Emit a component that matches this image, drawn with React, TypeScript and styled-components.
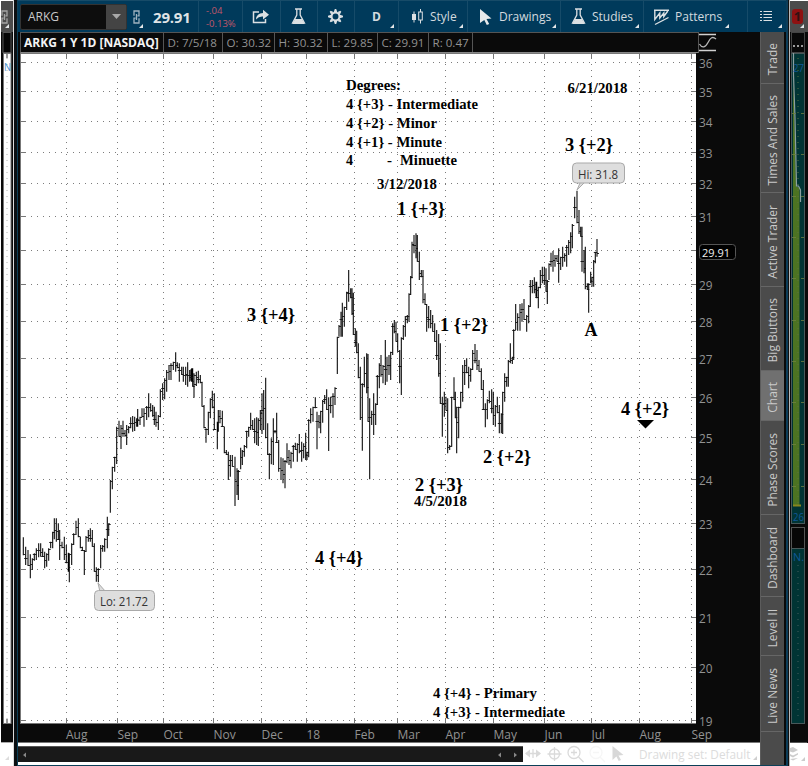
import React from 'react';
import styled, { createGlobalStyle } from 'styled-components';

const Global = createGlobalStyle`
  * { box-sizing: border-box; }
  html, body { margin: 0; padding: 0; background: #fff; }
  body { width: 808px; height: 766px; overflow: hidden; font-family: "Open Sans", "Noto Sans", sans-serif; }
  svg { display: block; flex: none; overflow: visible; }
`;

const Desktop = styled.div`
  display: grid;
  grid-template-columns: 1px 12px 1px 3px 769px 2px 1px 1px 18px;
  width: 808px;
  height: 766px;
  overflow: hidden;
`;

const Gutter = styled.div<{ $color: string }>`
  background: ${p => p.$color};
`;

const Sliver = styled.div`
  display: flex;
  flex-direction: column;
  overflow: hidden;
  background: #fff;
`;

const SliverHead = styled.div`
  display: flex;
  height: 32px;
  flex: none;
  background: #4b4b4b;
  border-top: 1px solid #fff;
`;

const SliverBody = styled.div`
  height: 711px;
  background: #0a0a0a;
`;

const SliverFoot = styled.div`
  display: flex;
  height: 23px;
`;

const Window = styled.div`
  display: flex;
  flex-direction: column;
  background: #0a0a0a;
  border-left: 1px solid #0c4058;
  border-bottom: 1px solid #0c4058;
  height: 766px;
`;

const Toolbar = styled.div`
  display: flex;
  height: 32px;
  flex: none;
  background: #003a5b;
  border-top: 1px solid #174b68;
  color: #d3dadf;
`;

const Tool = styled.div<{ $w: number; $pad?: number; $gap?: number; $last?: boolean }>`
  position: relative;
  display: flex;
  align-items: center;
  flex: none;
  width: ${p => p.$w}px;
  padding-left: ${p => p.$pad ?? 0}px;
  gap: ${p => p.$gap ?? 0}px;
  border-right: ${p => (p.$last ? 0 : 1)}px solid #164b69;
  font-size: 12px;
  white-space: nowrap;
`;

const Corner = styled.i<{ $right?: number; $bottom?: number; $color?: string }>`
  position: absolute;
  right: ${p => p.$right ?? 4}px;
  bottom: ${p => p.$bottom ?? 4}px;
  border-left: 4px solid transparent;
  border-bottom: 4px solid ${p => p.$color ?? '#e3e6e8'};
`;

const SymbolBox = styled.div`
  display: flex;
  align-items: center;
  width: 107px;
  height: 26px;
  padding-left: 7px;
  background: #0d0d0d;
  border: 1px solid #333;
  border-radius: 2px;
  color: #c8c8c8;
  font-size: 12px;
`;

const DropButton = styled.div`
  display: flex;
  align-items: center;
  justify-content: center;
  width: 20px;
  height: 24px;
  margin-left: auto;
  background: #444;
`;

const LastPrice = styled.b`
  font-size: 15px;
  color: #dfe3e6;
  letter-spacing: -0.2px;
`;

const Change = styled.div`
  display: flex;
  flex-direction: column;
  font-size: 9.5px;
  line-height: 13px;
  color: #c1566a;
`;

const Main = styled.div`
  display: flex;
  height: 733px;
`;

const Content = styled.div`
  display: flex;
  flex-direction: column;
  width: 742px;
`;

const InfoRow = styled.div`
  display: flex;
  height: 21px;
  width: 679px;
  margin-left: 2px;
  border: 1px solid #555;
  border-bottom-color: #888;
  color: #929292;
  font-size: 11.6px;
  line-height: 19px;
`;

const InfoCell = styled.div<{ $w: number; $bold?: boolean }>`
  width: ${p => p.$w}px;
  padding-left: ${p => (p.$bold ? 3 : 3.5)}px;
  border-right: 1px solid #555;
  font-weight: ${p => (p.$bold ? 700 : 400)};
  font-size: ${p => (p.$bold ? '12px' : '11.6px')};
  color: ${p => (p.$bold ? '#f4f4f4' : '#929292')};
  white-space: nowrap;
`;

const TopRow = styled.div`
  display: flex;
  gap: 1px;
`;

const PlotRow = styled.div`
  display: flex;
  height: 671px;
`;

const Footer = styled.div`
  position: relative;
  display: flex;
  align-items: center;
  height: 22px;
  background: #fff;
  color: #dcdcdc;
  font-size: 12px;
`;

const ScrollBar = styled.div`
  display: flex;
  align-items: center;
  width: 505px;
  height: 16px;
  margin-right: 2px;
  background: #191919;
  border-top: 1px solid #555;
`;

const SetLabel = styled.span`
  margin-left: 17px;
  font-size: 11.8px;
  white-space: nowrap;
`;

const Tabs = styled.div`
  display: flex;
  flex-direction: column;
  width: 24px;
  background: #4b4b4b;
  border-left: 1px solid #5c5c5c;
`;

const Tab = styled.div<{ $h: number; $active?: boolean }>`
  display: flex;
  align-items: center;
  justify-content: center;
  height: ${p => p.$h}px;
  flex: none;
  padding-top: 4px;
  background: ${p => (p.$active ? '#707070' : '#4b4b4b')};
  border-bottom: 1px solid #666;
  color: #c9c9c9;
  font-size: 12px;
`;

const TabText = styled.span`
  writing-mode: vertical-rl;
  transform: rotate(180deg);
  line-height: 16px;
  white-space: nowrap;
`;

type Span = [number, number, number];

// Each segment keeps bars as [x, high, low] in tripled units with its own origin.
const segments: { ox: number; oy: number; bars: Span[] }[] = [
  { ox: 0, oy: 330, bars: [
    [70,622,676],[77,650,705],[84,660,708],[91,673,745],[97,685,720],[103,670,692],[109,655,690],[116,640,682],[122,640,680],[128,655,680],[134,665,715],[140,670,710],[146,655,692],[152,635,655],[158,605,655],[163,565,628],[169,565,635],[175,580,630],[179,600,690],[186,635,655],[193,620,690],[199,645,700],[205,668,725],[208,670,757],[215,640,705],[221,610,645],[228,572,615],[235,565,622],[241,620,655],[247,650,663],[253,660,735],[258,618,665],[265,600,635],[271,595,635],[277,600,650],[283,640,725],[289,712,755],[295,715,757],[302,645,715],[308,645,665],[314,625,665],[322,560,655],[326,580,618],[331,450,548],[337,410,478],[344,380,425],[350,290,402],[357,272,320],[363,285,357],[369,272,320],[375,300,320],[380,285,345],[386,288,310],[392,262,295],[398,258,305],[404,260,303],[410,265,290],[413,237,290],[420,260,285],[426,235,262],[432,235,290],[440,228,270],[446,190,262],[452,220,245],[458,225,260],[463,230,285],[468,245,290],[475,255,300],[481,178,262],[488,160,210],[494,145,208],[500,120,185],[507,105,150],[513,100,150],[520,95,120],[527,67,125],[532,97,115],[538,100,155],[545,110,135],[550,110,155],[557,110,165],[563,97,170],[569,120,155],[575,115,155],[582,130,203]] },
  { ox: 190, oy: 260, bars: [
    [3,328,362],[8,325,380],[12,370,413],[19,335,378],[25,332,370],[31,345,370],[36,365,440],[42,435,505],[48,505,548],[55,455,525],[61,415,475],[67,392,445],[73,400,510],[82,485,568],[85,450,515],[90,450,490],[97,452,500],[103,500,580],[109,570,585],[115,575,660],[121,585,650],[127,585,620],[135,590,738],[141,625,705],[145,630,720],[152,563,628],[157,570,615],[163,555,590],[170,512,565],[176,500,530],[182,458,510],[188,480,510],[194,475,550],[200,472,555],[205,475,558],[211,450,510],[216,400,522],[221,390,510],[227,353,535],[233,490,585],[238,580,658],[244,535,613],[250,475,615],[255,510,520],[260,458,548],[266,540,635],[273,592,660],[279,595,670],[285,600,685],[291,550,610],[297,570,615],[303,575,625],[310,555,605],[316,548,570],[322,550,605],[328,522,580],[335,545,605],[341,550,595],[347,518,600],[351,575,600],[356,478,592],[362,445,490],[369,440,485],[376,412,445],[381,455,568],[387,465,505],[392,452,520],[398,420,488],[404,405,432],[410,388,450],[416,412,573],[422,410,460],[429,400,473],[435,382,435],[442,230,342],[447,195,230],[453,155,230],[457,128,230],[463,140,200],[470,95,150],[476,30,125],[482,85,115],[486,85,165],[490,98,225],[496,205,260],[500,212,280],[505,250,355],[511,320,480],[517,370,572],[523,290,382],[530,280,400],[534,282,485],[539,415,658],[545,452,495],[551,400,525],[557,430,495],[562,345,435],[568,310,385],[573,285,350],[579,315,370]] },
  { ox: 340, oy: 200, bars: [
    [136,420,555],[141,470,545],[147,465,525],[152,455,540],[158,370,465],[163,360,400],[168,365,425],[173,400,455],[179,450,550],[184,412,585],[190,375,420],[196,348,410],[202,345,370],[207,280,365],[212,228,285],[216,125,235],[222,105,160],[228,100,175],[232,105,185],[238,155,240],[244,210,232],[249,210,310],[255,280,315],[260,312,395],[266,318,385],[272,330,385],[278,345,395],[284,370,425],[290,390,480],[296,402,530],[301,430,612],[307,590,710],[313,575,650],[318,590,632],[323,595,760],[329,735,750],[335,590,740],[342,532,600],[346,575,655],[350,620,760],[356,620,715],[362,575,625],[368,495,605],[374,480,555],[380,475,520],[386,500,565],[392,505,545],[398,450,510],[405,432,490],[411,450,510],[417,480,515],[424,505,570],[430,540,630],[436,610,682],[442,598,658],[448,572,610],[455,568,640],[460,575,675],[466,615,680],[472,590,640],[478,615,700],[484,640,700],[488,575,702],[494,520,605],[500,530,560],[505,480,560],[511,430,490],[517,470,492],[521,388,480],[527,312,390],[533,340,392],[540,312,392],[546,310,365],[552,297,360],[560,345,395],[566,315,370],[571,240,320],[577,240,280],[583,232,280],[588,245,290]] },
  { ox: 480, oy: 70, bars: [
    [170,635,685],[175,650,715],[181,600,655],[187,590,640],[193,590,645],[198,595,665],[202,630,702],[207,580,630],[213,548,590],[219,543,605],[225,555,590],[231,555,575],[236,535,638],[242,560,600],[248,530,590],[254,550,575],[260,525,590],[266,510,555],[272,487,550],[277,462,535],[284,380,445],[291,362,460],[297,420,492],[302,470,500],[306,470,605],[312,540,610],[316,530,658],[322,640,660],[326,640,728],[332,605,640],[336,620,650],[341,570,650],[346,545,580],[351,507,560]] },
];

const bars = segments.flatMap(s =>
  s.bars.map(([x, h, l]) => ({ x: s.ox + x / 3, h: s.oy + h / 3, l: s.oy + l / 3 })),
);

const closes = bars.map((b, i) => {
  const next = bars[i + 1];
  const target = next ? (next.h + next.l) / 2 : 253.5;
  return Math.min(b.l - 0.5, Math.max(b.h + 1, target));
});

const barPath = bars.map(b => `M${b.x.toFixed(1)} ${b.h.toFixed(1)}V${b.l.toFixed(1)}`).join('');
const tickPath = bars
  .map((b, i) => {
    const y = Math.floor(closes[i]) + 0.5;
    return i % 4 === 1 ? `M${(b.x - 1.5).toFixed(1)} ${y}h3.5` : `M${b.x.toFixed(1)} ${y}h2`;
  })
  .join('');

const months: [string, number][] = [
  ['Aug', 66], ['Sep', 117.5], ['Oct', 163.5], ['Nov', 213.5], ['Dec', 261.5], ['18', 306.5], ['Feb', 354.5],
  ['Mar', 397.5], ['Apr', 445.5], ['May', 493.5], ['Jun', 544.5], ['Jul', 591.5], ['Aug', 639.5], ['Sep', 691.5],
];

const prices: [number, number][] = [
  [36, 63], [35, 92], [34, 122], [33, 153], [32, 184], [31, 217], [30, 251], [29, 285], [28, 322],
  [27, 359], [26, 398], [25, 438], [24, 480], [23, 524], [22, 570], [21, 618], [20, 668], [19, 721],
];

const notes: { t: string; x: number; y: number; w: number; s: number }[] = [
  { t: 'Degrees:', x: 346, y: 90, w: 55, s: 15 },
  { t: '4 {+3} - Intermediate', x: 346, y: 109, w: 132, s: 15 },
  { t: '4 {+2} - Minor', x: 346, y: 128, w: 91, s: 15 },
  { t: '4 {+1} - Minute', x: 346, y: 147, w: 96, s: 15 },
  { t: '4', x: 346, y: 165, w: 7, s: 15 },
  { t: '-', x: 387, y: 165, w: 5, s: 15 },
  { t: 'Minuette', x: 400, y: 165, w: 57, s: 15 },
  { t: '3/12/2018', x: 377, y: 189, w: 60, s: 15 },
  { t: '1 {+3}', x: 397, y: 215, w: 48, s: 19 },
  { t: '6/21/2018', x: 567.5, y: 93, w: 60, s: 15 },
  { t: '3 {+2}', x: 565, y: 151, w: 48, s: 19 },
  { t: '3 {+4}', x: 247, y: 321, w: 48, s: 19 },
  { t: '1 {+2}', x: 440, y: 331, w: 48, s: 19 },
  { t: 'A', x: 584.5, y: 336, w: 13, s: 18 },
  { t: '4 {+2}', x: 621, y: 415, w: 48, s: 19 },
  { t: '2 {+2}', x: 483, y: 463, w: 48, s: 19 },
  { t: '2 {+3}', x: 415, y: 491, w: 48, s: 19 },
  { t: '4/5/2018', x: 414, y: 505.5, w: 53, s: 15 },
  { t: '4 {+4}', x: 315, y: 564, w: 48, s: 19 },
  { t: '4 {+4} - Primary', x: 433, y: 698, w: 104, s: 15 },
  { t: '4 {+3} - Intermediate', x: 433, y: 717, w: 132, s: 15 },
];

const serif = '"Liberation Serif", "Times New Roman", serif';
const sans = '"Open Sans", "Noto Sans", sans-serif';

function Plot() {
  return (
    <svg width="679" height="671" viewBox="18 53 679 671">
      <rect x="18" y="53" width="679" height="671" fill="#0a0a0a" />
      <rect x="20" y="53" width="676" height="671" fill="#777" />
      <rect x="21" y="54" width="675" height="669" fill="#fff" />
      {prices.map(([p, y]) => (
        <g key={p}>
          <path d={`M25 ${Math.floor(y) - 0.5}H692`} stroke="#7c7c7c" strokeDasharray="1 5" />
          <path d={`M21 ${Math.floor(y) - 0.5}h4M692 ${Math.floor(y) - 0.5}h4`} stroke="#777" />
        </g>
      ))}
      {months.map(([m, x], i) => (
        <g key={m + i}>
          <path d={`M${Math.floor(x) + 0.5} 58V720`} stroke="#7c7c7c" strokeDasharray="1 5" />
          <path d={`M${Math.floor(x) + 0.5} 54v4M${Math.floor(x) + 0.5} 719v4`} stroke="#777" />
        </g>
      ))}
      <path d={barPath} stroke="#000" strokeWidth="1.05" fill="none" />
      <path d={tickPath} stroke="#111" strokeWidth="0.9" fill="none" />
      <g stroke="#a9a9a9" fill="#dedede">
        <path d="M100 592l-2-9 8 9" />
        <rect x="94.5" y="590.5" width="60" height="20" rx="4" />
        <path d="M580 183l-3 7 7-7" />
        <rect x="572.5" y="163" width="52" height="20" rx="4" />
      </g>
      <g fontFamily={sans} fontSize="12" fill="#333">
        <text x="100" y="606" textLength="48" lengthAdjust="spacingAndGlyphs">Lo: 21.72</text>
        <text x="578" y="178.5" textLength="40" lengthAdjust="spacingAndGlyphs">Hi: 31.8</text>
      </g>
      <g fontFamily={serif} fontWeight="700" fill="#000">
        {notes.map(n => (
          <text key={n.t + n.x + n.y} x={n.x} y={n.y} fontSize={n.s} textLength={n.w} lengthAdjust="spacingAndGlyphs">
            {n.t}
          </text>
        ))}
      </g>
      <path d="M637 420h17l-8.500 8.500z" fill="#000" />
    </svg>
  );
}

function PriceAxis() {
  return (
    <svg width="63" height="671" viewBox="697 53 63 671">
      <g fontFamily={sans} fontSize="12" fill="#929292">
        {prices.filter(([p]) => p !== 30).map(([p, y]) => (
          <text key={p} x="699" y={y + 4.5} textLength="13.500" lengthAdjust="spacingAndGlyphs">{p}</text>
        ))}
      </g>
      <rect x="699.5" y="244.500" width="36" height="15" rx="3" fill="#000" stroke="#555" />
      <text x="702" y="256.500" fontFamily={sans} fontSize="11.500" fill="#f0f0f0" textLength="28" lengthAdjust="spacingAndGlyphs">29.91</text>
    </svg>
  );
}

function TimeAxis() {
  return (
    <svg width="742" height="19" viewBox="18 724 742 19">
      <g fontFamily={sans} fontSize="12" fill="#929292">
        {months.map(([m, x], i) => <text key={m + i} x={x} y="739">{m}</text>)}
      </g>
      <path d="M18 742.500H760" stroke="#777" />
    </svg>
  );
}

const Flask = () => (
  <svg width="15" height="17" viewBox="0 0 15 17">
    <path d="M4 1h7M5.800 1.500V7L1.500 15.200h12L9.200 7V1.500" fill="none" stroke="#dbe0e3" strokeWidth="1.300" />
    <path d="M4 11h7l2.500 5h-12z" fill="#dbe0e3" />
  </svg>
);

const Link = ({ color = '#9fb3c0' }: { color?: string }) => (
  <svg width="7" height="14" viewBox="0 0 7 14">
    <path d="M1 5.800V1h5v4.800H4.500M2.500 8.200H1V13h5V8.200M3.500 4v6" fill="none" stroke={color} strokeWidth="1.300" />
  </svg>
);

const Share = () => (
  <svg width="18" height="15" viewBox="0 0 18 15">
    <path d="M7 3H1.500v10.500h12V10" fill="none" stroke="#dbe0e3" strokeWidth="1.500" />
    <path d="M4 10.500Q4.500 4 11 4V.8l6 4.900-6 4.800V7.500Q7 7 4 10.500z" fill="#dbe0e3" />
  </svg>
);

const Gear = () => (
  <svg width="15" height="15" viewBox="-7.500 -7.500 15 15">
    <circle r="3.900" fill="none" stroke="#dbe0e3" strokeWidth="1.900" />
    {[0, 45, 90, 135, 180, 225, 270, 315].map(a => (
      <path key={a} d="M-1.700-4.500L-.7-7.500H.7L1.700-4.500z" fill="#dbe0e3" transform={`rotate(${a})`} />
    ))}
  </svg>
);

const Candles = () => (
  <svg width="13" height="15" viewBox="0 0 13 15">
    <path d="M3 2.500v11M9.500 0v3M9.500 11v3.500" stroke="#dbe0e3" />
    <rect x="1" y="5" width="4" height="6" fill="#dbe0e3" />
    <rect x="7.700" y="3" width="3.600" height="8" fill="none" stroke="#dbe0e3" />
  </svg>
);

const Cursor = ({ color = '#e6e9eb' }: { color?: string }) => (
  <svg width="12" height="16" viewBox="0 0 12 16">
    <path d="M0 0l11.500 9.500-5 .4 2.700 5-2.400 1-2.500-5L0 14z" fill={color} />
  </svg>
);

const PatternIcon = () => (
  <svg width="15" height="16" viewBox="0 0 15 16">
    <path d="M0 1.200h15M1 15.500L14.500 8.500M.8 1.500v9l5-6.500v5l4-5v3.500l4-5.500" fill="none" stroke="#dbe0e3" strokeWidth="1.400" />
  </svg>
);

const List = () => (
  <svg width="12" height="11" viewBox="0 0 12 11">
    <path d="M0 .5h2M3.500 .5H12M0 3.500h2M3.500 3.500H12M0 6.500h2M3.500 6.500H12M0 9.500h2M3.500 9.500H12" stroke="#dbe0e3" strokeWidth="1.200" />
  </svg>
);

const CurveMark = () => (
  <svg width="17" height="20" viewBox="0 0 17 20">
    <path d="M-1 2.500h17M-1 18.500h17" stroke="#d0d0d0" strokeWidth="1.600" />
    <path d="M-.5 12C2 16.500 5.500 15.500 8 10.500S12.500 4 16 7" fill="none" stroke="#b8b8b8" strokeWidth="1.300" />
  </svg>
);

const FooterIcons = () => (
  <svg width="97" height="18" viewBox="525 745 97 18">
    <g fill="none" stroke="#dadada" strokeWidth="1.300">
      <path d="M526 753.500h14M533 749v9" />
      <circle cx="554.500" cy="754" r="5" />
      <path d="M554.500 747v14M547.500 754h14" />
      <circle cx="574" cy="752.500" r="6" />
      <path d="M578.500 757l5 5M571 752.500h6M574 749.500v6" />
      <g stroke="#f6f6f6"><circle cx="596" cy="752.500" r="6" /><path d="M600 757l5 5M593 752.500h6" /></g>
    </g>
    <path d="M525 753.500l5-4v8zM541 753.500l-5-4v8z" fill="#dadada" />
    <path d="M612.500 746l11 9-5 .5 2.500 4.500-2.300 1-2.300-4.500-3.900 3.500z" fill="#d8d8d8" />
  </svg>
);

const LeftMini = () => (
  <svg width="12" height="711" viewBox="1 32 12 711">
    <rect x="3" y="32.500" width="8" height="20" fill="#050505" stroke="#555" />
    <rect x="3.500" y="53.500" width="7.500" height="670" fill="#fff" stroke="#777" />
    <path d="M7 58V719" stroke="#b0b0b0" strokeDasharray="1 5" />
    <path d="M7 54v4M7 719v4" stroke="#777" strokeWidth="1.500" />
    <text x="4" y="71" fontFamily={sans} fontSize="11" fill="#3f8fd0" textLength="7" lengthAdjust="spacingAndGlyphs">N</text>
    <path d="M1 742.500H13" stroke="#aaa" />
  </svg>
);

const RightMini = () => (
  <svg width="17" height="711" viewBox="790 32 17 711">
    <rect x="791.500" y="32.500" width="13" height="20" fill="#080808" stroke="#444" />
    <path d="M793 46h10" stroke="#ccc" strokeDasharray="2 2" strokeWidth="1.500" />
    <rect x="791.500" y="53.500" width="13" height="470" fill="#003434" stroke="#48585a" />
    <path d="M793 75l1.500 43 1.500 68 3.500 2V505H793z" fill="#4c7322" />
    <path d="M793.500 53v22l1.500 43 1.500 68h2l2 4v12" fill="none" stroke="#8b9fa0" strokeWidth="1.200" />
    {[113, 154, 196, 237, 278, 320, 361, 402, 444, 486].map(y => (
      <path key={y} d={`M792 ${y}.5h4M801 ${y}.5h3`} stroke="#708040" strokeWidth="0.8" />
    ))}
    <path d="M798 58V504" stroke="#5c7040" strokeDasharray="1 5" />
    <path d="M793 505.500h8" stroke="#87861e" strokeWidth="2" />
    <g fontFamily={sans} fontSize="11" fill="#0f5797">
      <text x="793" y="72" textLength="11" lengthAdjust="spacingAndGlyphs">27</text>
      <text x="793" y="521" textLength="11" lengthAdjust="spacingAndGlyphs">26</text>
    </g>
    <rect x="791.500" y="527.500" width="13" height="21" fill="#070707" stroke="#555" />
    <rect x="791.500" y="548.500" width="13" height="175" fill="#003434" stroke="#48585a" />
    <path d="M798 565V720" stroke="#425c5c" strokeDasharray="1 5" />
    <text x="793" y="560.500" fontFamily={sans} fontSize="11" fill="#0f5797" textLength="11" lengthAdjust="spacingAndGlyphs">N.</text>
    <path d="M790 742.500h17" stroke="#555" />
  </svg>
);

const MiniIcon = styled.div`
  position: relative;
  display: flex;
  align-items: center;
  width: 100%;
  height: 100%;
`;

const Badge = styled.div`
  display: flex;
  align-items: center;
  justify-content: center;
  width: 11px;
  height: 15px;
  margin-left: 2px;
  margin-bottom: 1px;
  border-radius: 3px;
  background: #8e1111;
  color: #301212;
  font-size: 13px;
  font-weight: 700;
`;

const tabs: [string, number][] = [
  ['Trade', 52], ['Times And Sales', 109], ['Active Trader', 94], ['Big Buttons', 84], ['Chart', 50],
  ['Phase Scores', 94], ['Dashboard', 82], ['Level II', 59], ['Live News', 76],
];

export default function App() {
  return (
    <>
      <Global />
      <Desktop>
        <Gutter $color="#fff" />
        <Sliver>
          <SliverHead>
            <MiniIcon>
              <Link color="#a5a5a5" />
              <Corner />
            </MiniIcon>
          </SliverHead>
          <SliverBody><LeftMini /></SliverBody>
          <SliverFoot><MiniIcon><Corner $color="#ddd" $bottom={6} /></MiniIcon></SliverFoot>
        </Sliver>
        <Gutter $color="#dcdcdc" />
        <Gutter $color="#0b0f12" />
        <Window>
          <Toolbar>
            <Tool $w={129} $pad={2} $gap={6} $last>
              <SymbolBox>
                ARKG
                <DropButton>
                  <svg width="9" height="5" viewBox="0 0 9 5"><path d="M0 0h9L4.500 5z" fill="#a8a8a8" /></svg>
                </DropButton>
              </SymbolBox>
              <Link />
              <Corner $right={4} />
            </Tool>
            <Tool $w={52} $pad={6}><LastPrice>29.91</LastPrice></Tool>
            <Tool $w={44} $pad={7}><Change><span>-.04</span><span>-0.13%</span></Change></Tool>
            <Tool $w={38} $pad={9}><Share /></Tool>
            <Tool $w={37} $pad={10}><Flask /></Tool>
            <Tool $w={37} $pad={10}><Gear /></Tool>
            <Tool $w={44} $pad={17}><b>D</b><Corner /></Tool>
            <Tool $w={69} $pad={12} $gap={6}><Candles />Style<Corner /></Tool>
            <Tool $w={93} $pad={12} $gap={7}><Cursor />Drawings<Corner /></Tool>
            <Tool $w={83} $pad={10} $gap={6}><Flask />Studies<Corner /></Tool>
            <Tool $w={104} $pad={10} $gap={6}><PatternIcon />Patterns<Corner $right={18} /></Tool>
            <Tool $w={38} $pad={12} $last><List /><Corner $right={4} /></Tool>
          </Toolbar>
          <Main>
            <Content>
              <TopRow>
                <InfoRow>
                  <InfoCell $w={143} $bold>ARKG 1 Y 1D [NASDAQ]</InfoCell>
                  <InfoCell $w={59}>D: 7/5/18</InfoCell>
                  <InfoCell $w={52}>O: 30.32</InfoCell>
                  <InfoCell $w={53}>H: 30.32</InfoCell>
                  <InfoCell $w={50}>L: 29.85</InfoCell>
                  <InfoCell $w={51}>C: 29.91</InfoCell>
                  <InfoCell $w={44}>R: 0.47</InfoCell>
                </InfoRow>
                <CurveMark />
              </TopRow>
              <PlotRow>
                <Plot />
                <PriceAxis />
              </PlotRow>
              <TimeAxis />
              <Footer>
                <ScrollBar>
                  <svg width="505" height="14" viewBox="0 0 505 14">
                    <path d="M8 4.500v5l-3-2.500zM483 4.500v5l-3-2.500zM496 4.500v5l3-2.500z" fill="#888" />
                  </svg>
                </ScrollBar>
                <FooterIcons />
                <SetLabel>Drawing set: Default</SetLabel>
                <Corner $right={3} $bottom={5} $color="#cfcfcf" />
              </Footer>
            </Content>
            <Tabs>
              {tabs.map(([name, h]) => (
                <Tab key={name} $h={h} $active={name === 'Chart'}><TabText>{name}</TabText></Tab>
              ))}
            </Tabs>
          </Main>
        </Window>
        <Gutter $color="#0c3d59" />
        <Gutter $color="#111" />
        <Gutter $color="#b8b8b8" />
        <Sliver>
          <SliverHead>
            <MiniIcon><Badge>1</Badge><Corner $right={4} /></MiniIcon>
          </SliverHead>
          <SliverBody><RightMini /></SliverBody>
          <SliverFoot>
            <MiniIcon>
              <svg width="9" height="15" viewBox="0 0 9 15">
                <path d="M0 1l3-1 5 3-5 2.500-3-1M0 7l3 1.500L8 6v1.500L3 10.500 0 9M0 12l3 1.500 5-2.500" fill="#ccc" />
              </svg>
              <Corner $right={3} $bottom={5} $color="#ccc" />
            </MiniIcon>
          </SliverFoot>
        </Sliver>
      </Desktop>
    </>
  );
}
